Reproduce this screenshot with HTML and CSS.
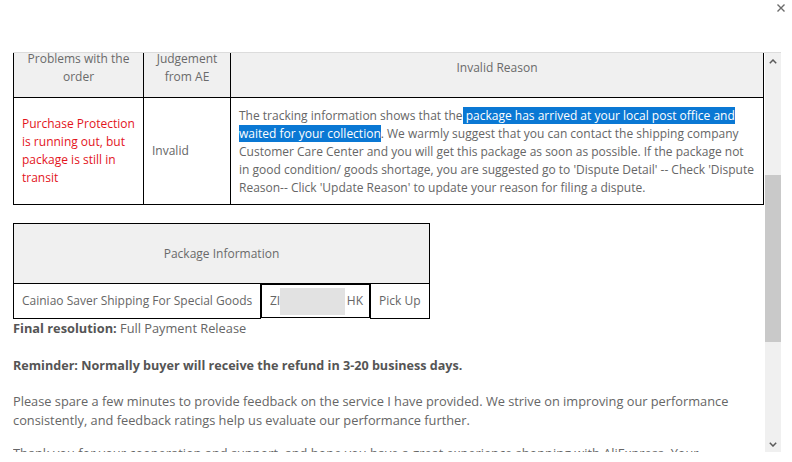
FILE: index.html
```html
<!DOCTYPE html>
<html lang="en">
<head>
<meta charset="utf-8">
<title>Dispute detail</title>
<link rel="stylesheet" href="styles.css">
</head>
<body>
<div class="dialog">
  <div class="dialog-head">
    <button class="close" type="button" aria-label="Close">
      <svg width="8" height="8" viewBox="0 0 8 8"><path d="M0.5 0.5 L7.5 7.5 M7.5 0.5 L0.5 7.5" stroke="#6b6b6b" stroke-width="1.4" fill="none"/></svg>
    </button>
  </div>
  <div class="dialog-body">
    <div class="viewport">
      <div class="scroll-content">
        <table class="grid judge">
          <colgroup><col class="c-problem"><col class="c-judge"><col></colgroup>
          <tr class="head">
            <th>Problems with the order</th>
            <th>Judgement from AE</th>
            <th>Invalid Reason</th>
          </tr>
          <tr>
            <td class="problem">Purchase Protection is running out, but package is still in transit</td>
            <td>Invalid</td>
            <td class="reason">The tracking information shows that the<span class="sel"> package has arrived at your local post office and </span><span class="sel">waited for your collection</span>. We warmly suggest that you can contact the shipping company Customer Care Center and you will get this package as soon as possible. If the package not in good condition/ goods shortage, you are suggested go to 'Dispute Detail' -- Check 'Dispute Reason-- Click 'Update Reason' to update your reason for filing a dispute.</td>
          </tr>
        </table>

        <table class="grid package">
          <colgroup><col class="c-carrier"><col class="c-track"><col></colgroup>
          <tr class="head tall">
            <th colspan="3">Package Information</th>
          </tr>
          <tr>
            <td>Cainiao Saver Shipping For Special Goods</td>
            <td class="track"><span class="track-no">ZI<span class="masked"></span>HK</span></td>
            <td>Pick Up</td>
          </tr>
        </table>

        <p class="resolution"><b>Final resolution:</b> Full Payment Release</p>
        <p class="reminder"><b>Reminder: Normally buyer will receive the refund in 3-20 business days.</b></p>
        <p class="note">Please spare a few minutes to provide feedback on the service I have provided. We strive on improving our performance consistently, and feedback ratings help us evaluate our performance further.</p>
        <p class="note next">Thank you for your cooperation and support, and hope you have a great experience shopping with AliExpress. Your satisfaction is our priority.</p>
      </div>
    </div>
    <div class="scrollbar">
      <span class="arrow up"><svg width="8" height="5" viewBox="0 0 8 5"><path d="M0.8 4.2 L4 1 L7.2 4.2" stroke="#5a5a5a" stroke-width="1.5" fill="none"/></svg></span>
      <span class="track"><span class="thumb"></span></span>
      <span class="arrow down"><svg width="8" height="5" viewBox="0 0 8 5"><path d="M0.8 0.8 L4 4 L7.2 0.8" stroke="#5a5a5a" stroke-width="1.5" fill="none"/></svg></span>
    </div>
  </div>
</div>
</body>
</html>
```

FILE: styles.css
```css
* { box-sizing: border-box; }

html, body {
  margin: 0;
  background: #fff;
}

body {
  font-family: "Open Sans", "Liberation Sans", sans-serif;
  color: #666;
  width: 792px;
  height: 462px;
  overflow: hidden;
}

.dialog {
  display: flex;
  flex-direction: column;
  height: 462px;
}

.dialog-head {
  height: 52px;
  display: flex;
  justify-content: flex-end;
  align-items: flex-start;
  padding: 4px 7px 0 0;
}

.close {
  border: 0;
  padding: 0;
  margin: 0;
  background: none;
  width: 8px;
  height: 8px;
  display: block;
  cursor: pointer;
}
.close svg { display: block; }

.dialog-body {
  display: flex;
  margin-left: 13px;
  width: 768px;
  height: 400px;
  border-top: 1px solid #dcdcdc;
}

.viewport {
  flex: 1;
  overflow: hidden;
}

/* content is shown scrolled down by 15px */
.scroll-content {
  margin-top: -15px;
  width: 752px;
}

/* tables */
.grid {
  border-collapse: collapse;
  table-layout: fixed;
  font-size: 12px;
  line-height: 18px;
  color: #666;
}
.grid th,
.grid td {
  border: 1px solid #000;
  padding: 8px 8px;
  vertical-align: middle;
  text-align: left;
  font-weight: normal;
}
.grid .head th {
  background: #f0f0f0;
  text-align: center;
  padding: 11px 8px;
  color: #6a6a6a;
}

.judge { width: 751px; }
.judge .c-problem { width: 130px; }
.judge .c-judge { width: 87px; }
.judge .problem { color: #e3141c; }
.judge .reason { padding: 9px 8px 7px; }

.sel {
  background: #0a78d4;
  color: #fff;
}

.package {
  width: 417px;
  margin-top: 18px;
}
.package .c-carrier { width: 247px; }
.package .c-track { width: 110px; }
.package .tall { height: 60px; }
.package td { padding: 7px 8px; white-space: nowrap; }
.package .track { padding: 0 6px 0 8px; }

.track-no {
  display: flex;
  align-items: center;
  height: 32px;
}

.masked {
  display: block;
  width: 65px;
  height: 27px;
  margin: 0 2px 0 0;
  background: #e2e2e2;
}

/* text below the tables */
p {
  margin: 0;
  font-size: 12.8px;
  line-height: 18px;
  color: #666;
}
p b { color: #555; font-weight: 700; }

.reminder { margin-top: 19px; }
.reminder b { font-size: 12.6px; }
.note { margin-top: 17px; line-height: 19px; }
.note.next { margin-top: 14px; }

/* scrollbar */
.scrollbar {
  width: 16px;
  background: #f0f0f0;
  display: flex;
  flex-direction: column;
}
.arrow {
  height: 16px;
  display: flex;
  align-items: center;
  justify-content: center;
}
.track {
  flex: 1;
  display: flex;
  flex-direction: column;
}
.thumb {
  margin-top: 106px;
  height: 167px;
  background: #c9c9c9;
}
```
